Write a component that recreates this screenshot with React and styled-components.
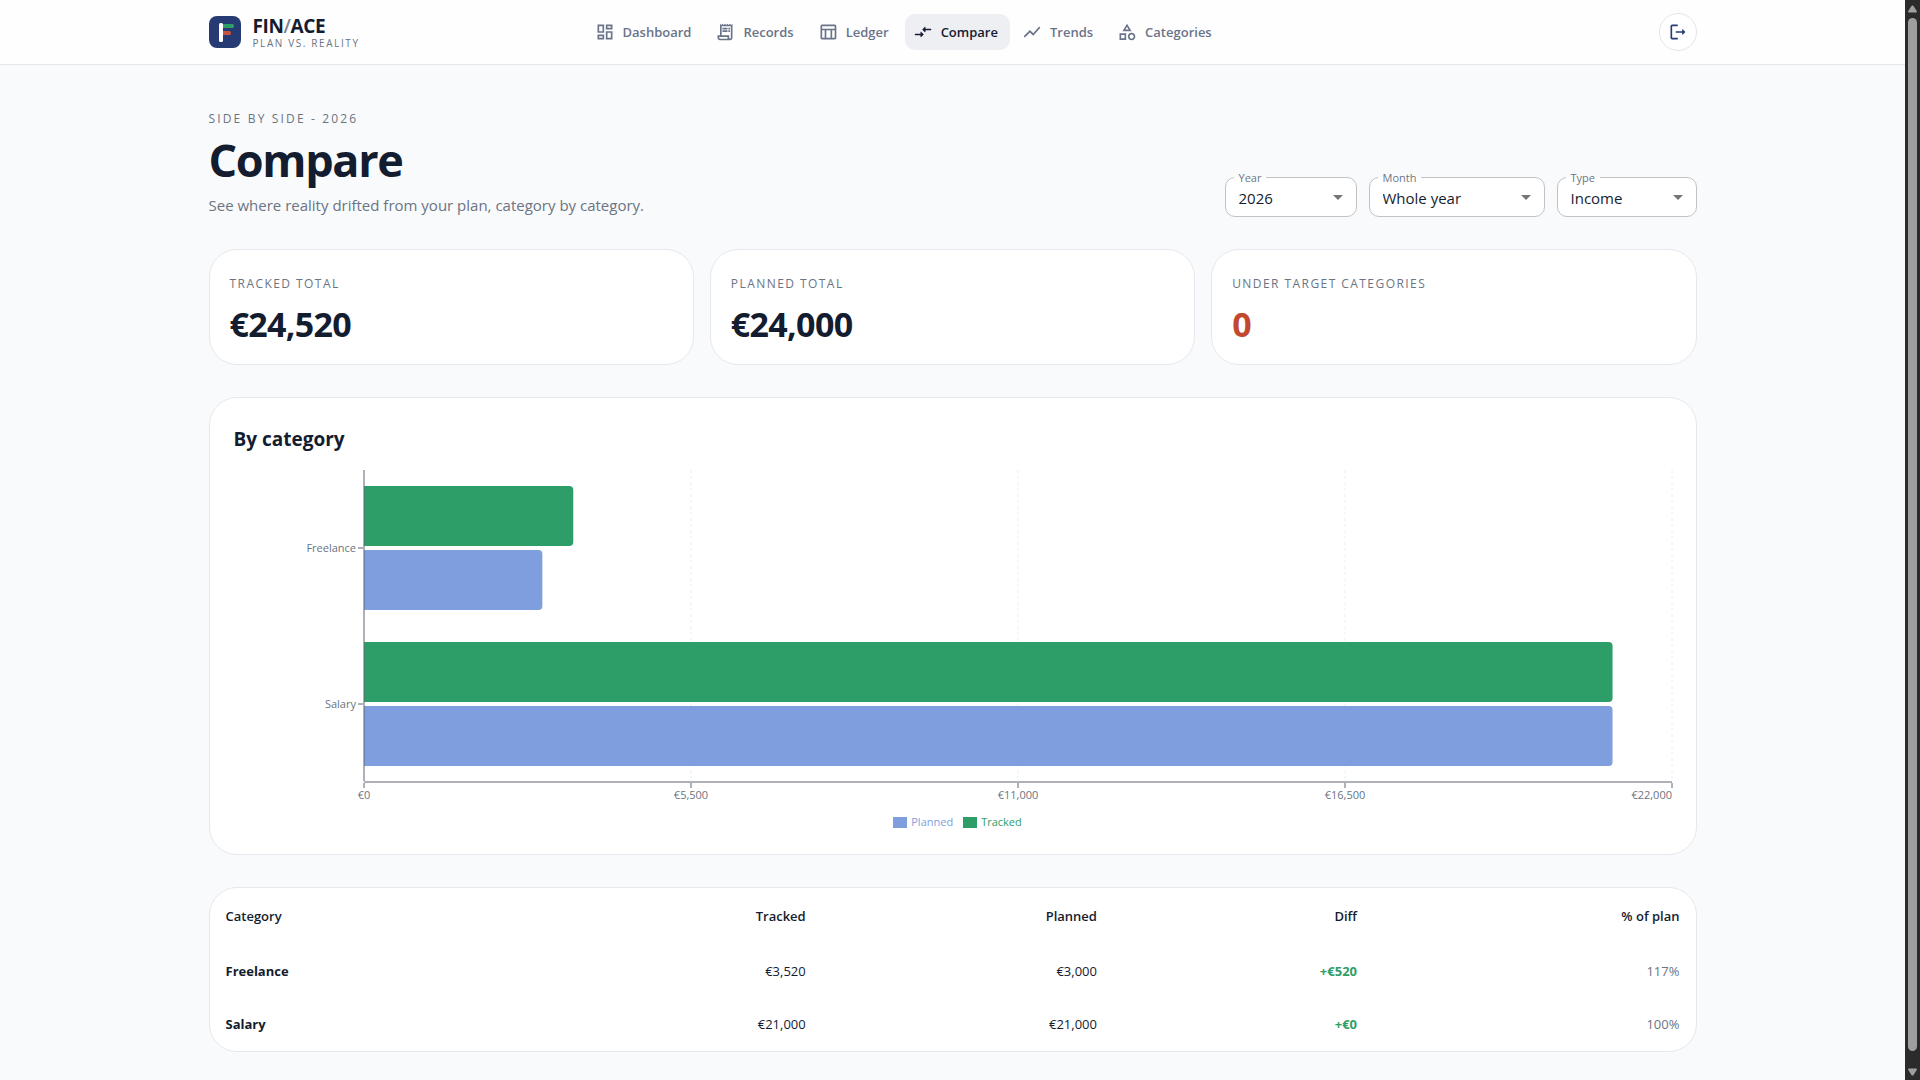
import React from 'react'
import styled, { createGlobalStyle } from 'styled-components'
import {
  MdOutlineDashboard,
  MdOutlineReceiptLong,
  MdOutlineTableChart,
  MdShowChart,
  MdOutlineCategory,
  MdArrowDropDown,
} from 'react-icons/md'

const GlobalStyle = createGlobalStyle`
  * {
    box-sizing: border-box;
  }
  body {
    margin: 0;
    background: #f9fafc;
    color: #141c2f;
    font-family: "Open Sans", "Noto Sans", sans-serif;
    font-size: 15px;
  }
`

const Shell = styled.div`
  display: flex;
  height: 100vh;
`
const Page = styled.div`
  flex: 1;
  min-width: 0;
  overflow: hidden;
`

/* scrollbar */
const ScrollTrack = styled.div`
  width: 15px;
  display: flex;
  flex-direction: column;
  align-items: center;
  justify-content: space-between;
  gap: 5px;
  padding: 5px 0 4px;
  background: #2b2b2b;
`
const ScrollThumb = styled.div`
  flex: 1;
  width: 9px;
  margin-bottom: 12px;
  border-radius: 5px;
  background: #9f9f9f;
`

/* header */
const Container = styled.div`
  width: 100%;
  max-width: 1536px;
  margin: 0 auto;
  padding: 0 24px;
`
const Header = styled.header`
  background: #fefefe;
  border-bottom: 1px solid #e3e6ea;
`
const HeaderInner = styled(Container)`
  display: flex;
  align-items: center;
  height: 64px;
`
const Brand = styled.a`
  display: flex;
  align-items: center;
  gap: 12px;
  width: 378px;
  color: inherit;
  text-decoration: none;
`
const BrandName = styled.div`
  font-size: 19px;
  font-weight: 700;
  line-height: 22px;
  letter-spacing: -0.02em;
  span {
    color: #7b8194;
    font-weight: 600;
  }
`
const BrandTag = styled.div`
  font-size: 10px;
  line-height: 12px;
  letter-spacing: 0.16em;
  color: #6b7385;
`
const Nav = styled.nav`
  flex: 1;
  display: flex;
  gap: 4px;
`
const NavLink = styled.a`
  display: flex;
  align-items: center;
  gap: 8px;
  height: 36px;
  padding: 0 12px 0 8px;
  border-radius: 10px;
  font-size: 13px;
  font-weight: 600;
  text-decoration: none;
  color: ${(p) => (p.$active ? '#141c2f' : '#6b7389')};
  background: ${(p) => (p.$active ? '#eeeff3' : 'transparent')};
  svg {
    width: 20px;
    height: 20px;
  }
`
const LogoutButton = styled.button`
  display: grid;
  place-items: center;
  width: 38px;
  height: 38px;
  padding: 0;
  border: 1px solid #e3e6ea;
  border-radius: 50%;
  background: #fff;
  color: #263b73;
  svg {
    width: 20px;
    height: 20px;
  }
`

/* page head */
const Main = styled(Container)`
  display: flex;
  flex-direction: column;
  gap: 32px;
  padding-top: 44px;
`
const PageHead = styled.div`
  display: flex;
  align-items: flex-end;
  justify-content: space-between;
`
const Overline = styled.div`
  font-size: 12px;
  line-height: 20px;
  letter-spacing: ${(p) => (p.$wide ? '0.18em' : '0.12em')};
  text-transform: uppercase;
  color: #6b7483;
`
const Title = styled.h1`
  margin: 5px 0 7px;
  font-size: 45px;
  font-weight: 700;
  line-height: 52px;
  letter-spacing: -0.03em;
`
const Lead = styled.p`
  margin: 0;
  font-size: 15px;
  line-height: 24px;
  color: #6b7483;
`
const Filters = styled.div`
  display: flex;
  gap: 12px;
`
const Field = styled.div`
  position: relative;
  width: ${(p) => p.$width}px;
  svg {
    position: absolute;
    top: 8px;
    right: 7px;
    width: 24px;
    height: 24px;
    color: #757575;
    pointer-events: none;
  }
`
const FieldLabel = styled.label`
  position: absolute;
  top: -7px;
  left: 9px;
  padding: 0 5px;
  font-size: 11px;
  line-height: 16px;
  color: #6b7483;
  background: linear-gradient(#f9fafc 7px, #fff 7px);
`
const Select = styled.select`
  appearance: none;
  display: block;
  width: 100%;
  height: 40px;
  padding: 2px 32px 0 13px;
  border: 1px solid #c0c2c6;
  border-radius: 10px;
  background: #fff;
  color: #141c2f;
  font-family: inherit;
  font-size: 15px;
`

/* cards */
const Card = styled.section`
  background: #fff;
  border: 1px solid #e5e8ec;
  border-radius: 28px;
`
const Stats = styled.div`
  display: grid;
  grid-template-columns: repeat(3, 1fr);
  gap: 16px;
`
const StatCard = styled(Card)`
  padding: 24px 20px 18px;
`
const StatValue = styled.div`
  margin-top: 8px;
  font-size: 34px;
  font-weight: 700;
  line-height: 44px;
  letter-spacing: -0.02em;
  color: ${(p) => (p.$alert ? '#c2492f' : '#141c2f')};
`
const ChartCard = styled(Card)`
  padding: 25px 24px 22px;
`
const CardTitle = styled.h2`
  margin: 0 0 15px;
  font-size: 19px;
  font-weight: 700;
  line-height: 32px;
`
const Plot = styled.svg`
  display: block;
  width: calc(100% - 130px);
  height: 330px;
  margin-left: 130px;
  overflow: visible;
  font-size: 11px;
  fill: #6b7483;
`
const Legend = styled.div`
  display: flex;
  justify-content: center;
  gap: 10px;
  padding: 12px 0 0 10px;
`
const LegendItem = styled.span`
  display: flex;
  align-items: center;
  gap: 4px;
  font-size: 11px;
  line-height: 20px;
  color: ${(p) => p.$color};
  &::before {
    content: "";
    width: 14px;
    height: 11px;
    background: ${(p) => p.$color};
  }
`

/* table */
const TableCard = styled(Card)`
  padding-bottom: 1px;
`
const Table = styled.table`
  width: 100%;
  table-layout: fixed;
  border-collapse: collapse;
  font-size: 13px;
`
const Cell = styled.td`
  height: 53px;
  padding: 0 16px;
  text-align: ${(p) => (p.$left ? 'left' : 'right')};
  font-weight: ${(p) => (p.$bold ? 700 : 400)};
  color: ${(p) => p.$color || '#141c2f'};
`
const HeadCell = styled.th`
  height: 56px;
  width: ${(p) => p.$width};
  padding: 0 16px;
  font-weight: 600;
  text-align: ${(p) => (p.$left ? 'left' : 'right')};
`

const TRACKED = '#2e9e69'
const PLANNED = '#7f9edd'
const MAX = 22000

function CompareIcon() {
  return (
    <svg viewBox="0 0 24 24" fill="currentColor">
      <path d="M9.01 14H3c-.55 0-1 .45-1 1s.45 1 1 1h6.01v1.79c0 .45.54.67.85.35l2.78-2.79c.19-.2.19-.51 0-.71l-2.78-2.79c-.31-.32-.85-.09-.85.35V14zm5.98-2.21V10H21c.55 0 1-.45 1-1s-.45-1-1-1h-6.01V6.21c0-.45-.54-.67-.85-.35l-2.78 2.79c-.19.2-.19.51 0 .71l2.78 2.79c.31.31.85.09.85-.36z" />
    </svg>
  )
}

function LogoutIcon() {
  return (
    <svg viewBox="0 0 24 24" fill="currentColor">
      <path d="M5 5h6c.55 0 1-.45 1-1s-.45-1-1-1H5c-1.1 0-2 .9-2 2v14c0 1.1.9 2 2 2h6c.55 0 1-.45 1-1s-.45-1-1-1H5V5z" />
      <path d="M20.65 11.65l-2.79-2.79c-.32-.32-.86-.1-.86.35V11h-7c-.55 0-1 .45-1 1s.45 1 1 1h7v1.79c0 .45.54.67.85.35l2.79-2.79c.2-.19.2-.51.01-.7z" />
    </svg>
  )
}

const links = [
  { label: 'Dashboard', icon: MdOutlineDashboard },
  { label: 'Records', icon: MdOutlineReceiptLong },
  { label: 'Ledger', icon: MdOutlineTableChart },
  { label: 'Compare', icon: CompareIcon, active: true },
  { label: 'Trends', icon: MdShowChart },
  { label: 'Categories', icon: MdOutlineCategory },
]

const filters = [
  { id: 'year', label: 'Year', width: 132, options: ['2026', '2025'] },
  { id: 'month', label: 'Month', width: 176, options: ['Whole year', 'January', 'February'] },
  { id: 'type', label: 'Type', width: 140, options: ['Income', 'Expense'] },
]

const rows = [
  { name: 'Freelance', tracked: 3520, planned: 3000 },
  { name: 'Salary', tracked: 21000, planned: 21000 },
]

const euro = (n) => '€' + n.toLocaleString('en-US')

function Logo() {
  return (
    <svg width="32" height="32" viewBox="0 0 32 32" aria-hidden="true">
      <rect width="32" height="32" rx="8" fill="#263b73" />
      <rect x="12" y="8" width="13" height="4" rx="1.5" fill="#2e9e69" />
      <rect x="12" y="15" width="10" height="4" rx="1.5" fill="#c4553f" />
      <rect x="10" y="7" width="4" height="19" rx="1.5" fill="#fff" />
    </svg>
  )
}

function Bar({ y, value, color }) {
  return (
    <g fill={color}>
      <rect y={y} width={(value / MAX) * 100 + '%'} height="60" rx="4" />
      <rect y={y} width="8" height="60" />
    </g>
  )
}

function CategoryChart() {
  const ticks = [0, 5500, 11000, 16500, 22000]
  return (
    <Plot role="img" aria-label="Tracked and planned by category">
      {ticks.slice(1).map((t) => (
        <line key={t} x1={(t / MAX) * 100 + '%'} x2={(t / MAX) * 100 + '%'} y1="0" y2="312" stroke="#eceef1" strokeDasharray="3 3" />
      ))}
      {rows.map((r, i) => (
        <g key={r.name}>
          <Bar y={i * 156 + 16} value={r.tracked} color={TRACKED} />
          <Bar y={i * 156 + 80} value={r.planned} color={PLANNED} />
          <text x="-8" y={i * 156 + 82} textAnchor="end">{r.name}</text>
        </g>
      ))}
      <g stroke="#5f6673" strokeWidth="2" opacity="0.5">
        <line x1="0" x2="0" y1="0" y2="311" />
        <line x1="0" x2="100%" y1="312" y2="312" />
        {ticks.map((t) => (
          <line key={t} x1={(t / MAX) * 100 + '%'} x2={(t / MAX) * 100 + '%'} y1="313" y2="318" />
        ))}
        <line x1="-6" x2="-1" y1="78" y2="78" />
        <line x1="-6" x2="-1" y1="234" y2="234" />
      </g>
      {ticks.map((t) => (
        <text key={t} x={(t / MAX) * 100 + '%'} y="329" textAnchor={t === MAX ? 'end' : 'middle'}>
          {euro(t)}
        </text>
      ))}
    </Plot>
  )
}

export default function App() {
  return (
    <Shell>
      <GlobalStyle />
      <Page>
        <Header>
          <HeaderInner>
            <Brand href="#">
              <Logo />
              <div>
                <BrandName>FIN<span>/</span>ACE</BrandName>
                <BrandTag>PLAN VS. REALITY</BrandTag>
              </div>
            </Brand>
            <Nav>
              {links.map(({ label, icon: Icon, active }) => (
                <NavLink key={label} href="#" $active={active}>
                  <Icon />
                  {label}
                </NavLink>
              ))}
            </Nav>
            <LogoutButton type="button" aria-label="Log out">
              <LogoutIcon />
            </LogoutButton>
          </HeaderInner>
        </Header>

        <Main as="main">
          <PageHead>
            <div>
              <Overline $wide>Side by side - 2026</Overline>
              <Title>Compare</Title>
              <Lead>See where reality drifted from your plan, category by category.</Lead>
            </div>
            <Filters>
              {filters.map((f) => (
                <Field key={f.id} $width={f.width}>
                  <Select id={f.id}>
                    {f.options.map((o) => (
                      <option key={o}>{o}</option>
                    ))}
                  </Select>
                  <FieldLabel htmlFor={f.id}>{f.label}</FieldLabel>
                  <MdArrowDropDown />
                </Field>
              ))}
            </Filters>
          </PageHead>

          <Stats>
            <StatCard>
              <Overline>Tracked total</Overline>
              <StatValue>{euro(24520)}</StatValue>
            </StatCard>
            <StatCard>
              <Overline>Planned total</Overline>
              <StatValue>{euro(24000)}</StatValue>
            </StatCard>
            <StatCard>
              <Overline>Under target categories</Overline>
              <StatValue $alert>0</StatValue>
            </StatCard>
          </Stats>

          <ChartCard>
            <CardTitle>By category</CardTitle>
            <CategoryChart />
            <Legend>
              <LegendItem $color={PLANNED}>Planned</LegendItem>
              <LegendItem $color={TRACKED}>Tracked</LegendItem>
            </Legend>
          </ChartCard>

          <TableCard>
            <Table>
              <thead>
                <tr>
                  <HeadCell $left $width="22%">Category</HeadCell>
                  <HeadCell $width="19.2%">Tracked</HeadCell>
                  <HeadCell $width="19.6%">Planned</HeadCell>
                  <HeadCell $width="17.5%">Diff</HeadCell>
                  <HeadCell $width="21.7%">% of plan</HeadCell>
                </tr>
              </thead>
              <tbody>
                {rows.map((r) => (
                  <tr key={r.name}>
                    <Cell $left $bold>{r.name}</Cell>
                    <Cell>{euro(r.tracked)}</Cell>
                    <Cell>{euro(r.planned)}</Cell>
                    <Cell $bold $color={TRACKED}>+{euro(r.tracked - r.planned)}</Cell>
                    <Cell $color="#6b7483">{Math.round((r.tracked / r.planned) * 100)}%</Cell>
                  </tr>
                ))}
              </tbody>
            </Table>
          </TableCard>
        </Main>
      </Page>
      <ScrollTrack aria-hidden="true">
        <svg width="9" height="8" viewBox="0 0 9 8"><path d="M3.6 .8Q4.5 0 5.4 .8L9 6.5Q9 7.5 8 7.5H1Q0 7.5 0 6.5Z" fill="#9f9f9f" /></svg>
        <ScrollThumb />
        <svg width="9" height="8" viewBox="0 0 9 8"><path d="M3.6 7.2Q4.5 8 5.4 7.2L9 1.5Q9 .5 8 .5H1Q0 .5 0 1.5Z" fill="#9f9f9f" /></svg>
      </ScrollTrack>
    </Shell>
  )
}
